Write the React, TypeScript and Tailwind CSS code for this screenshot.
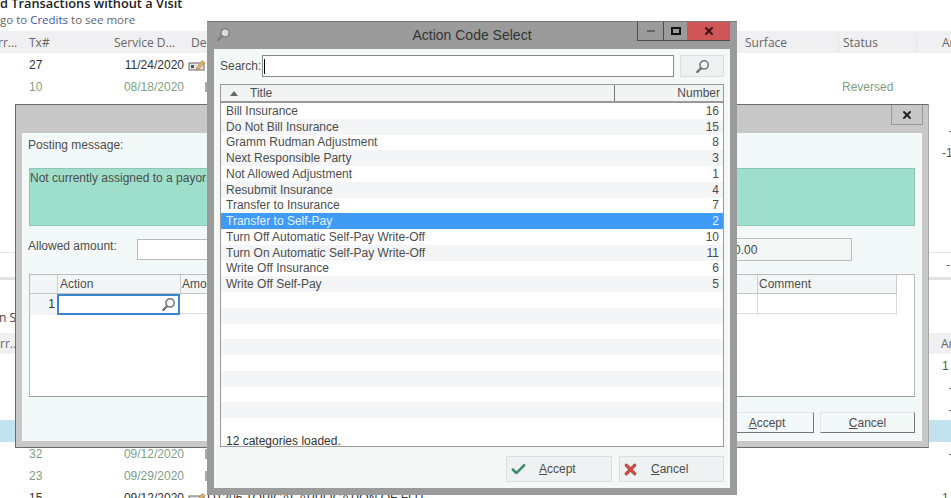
import { Check, X } from 'lucide-react';

const actionCodes = [
  ['Bill Insurance', '16'],
  ['Do Not Bill Insurance', '15'],
  ['Gramm Rudman Adjustment', '8'],
  ['Next Responsible Party', '3'],
  ['Not Allowed Adjustment', '1'],
  ['Resubmit Insurance', '4'],
  ['Transfer to Insurance', '7'],
  ['Transfer to Self-Pay', '2'],
  ['Turn Off Automatic Self-Pay Write-Off', '10'],
  ['Turn On Automatic Self-Pay Write-Off', '11'],
  ['Write Off Insurance', '6'],
  ['Write Off Self-Pay', '5'],
  ['', ''],
  ['', ''],
  ['', ''],
  ['', ''],
  ['', ''],
  ['', ''],
  ['', ''],
  ['', ''],
  ['', ''],
];

type Row = { tx?: string; date?: string; muted?: boolean; status?: string; amount?: string; mark?: boolean; note?: boolean; tint?: boolean };

const upperRows: Row[] = [
  { tx: '27', date: '11/24/2020', note: true },
  { tx: '10', date: '08/18/2020', muted: true, status: 'Reversed', mark: true },
  { note: true },
  { amount: '  -' },
  { amount: '-1' },
  {},
  {},
  {},
];

const lowerRows: Row[] = [
  { amount: '1' },
  { amount: '  -' },
  { amount: '  -' },
  { tint: true },
  { tx: '32', date: '09/12/2020', muted: true, amount: '  -', mark: true },
  { tx: '23', date: '09/29/2020', muted: true, mark: true },
  { tx: '15', date: '09/12/2020', amount: '1', note: true },
];

function SearchGlyph({ className }: { className: string }) {
  return (
    <svg viewBox="0 0 16 16" className={className}>
      <circle cx="9.7" cy="6.3" r="4.4" fill="#f7f7f7" stroke="#777" strokeWidth="1.7" />
      <path d="M6.4 9.8 2.4 13.8" stroke="#6d6d6d" strokeWidth="2.4" strokeLinecap="round" />
    </svg>
  );
}

function NoteIcon() {
  return (
    <svg viewBox="0 0 18 12" className="w-[18px] h-[12px] shrink-0">
      <rect x="1" y="4" width="15" height="7" fill="#e6e6e6" stroke="#666" />
      <rect x="3" y="6" width="3" height="3" fill="#555" />
      <path d="M8 10 14 1.5l3 2L11 10Z" fill="#e3b26d" stroke="#a87a3c" strokeWidth="0.6" />
    </svg>
  );
}

function BackRow({ row }: { row: Row }) {
  return (
    <div className={`grid grid-cols-[29px_81px_74px_4px_553px_97px_78px_35px] h-[22px] pt-[2px] items-center text-[12px] font-['Liberation_Sans',sans-serif] whitespace-pre ${row.tint ? 'bg-[#c3e2ef]' : ''} ${row.muted ? 'text-[#7f9f85]' : 'text-[#333]'}`}>
      <span />
      <span>{row.tx}</span>
      <span className="text-right">{row.date}</span>
      <span />
      <span className="flex items-center gap-[1px]">
        {row.note && <NoteIcon />}
        {row.mark && <span className="ml-[17px] w-[2px] h-[10px] bg-[#aaa]" />}
        {row.tx === '15' && <span className="text-[#333]">D1206 TOPICAL APPLICATION OF FLU</span>}
      </span>
      <span />
      <span className="pl-[4px]">{row.status}</span>
      <span className="pl-[26px] text-[#555]">{row.amount}</span>
    </div>
  );
}

function Underlined({ first, rest }: { first: string; rest: string }) {
  return (
    <span>
      <span className="underline">{first}</span>
      {rest}
    </span>
  );
}

export default function App() {
  return (
    <div className="relative w-[951px] h-[498px] overflow-hidden bg-white font-['Liberation_Sans',sans-serif] text-[#4d4d4d] text-[12px]">
      {/* page behind the dialogs */}
      <div className="flex flex-col font-['Open_Sans',sans-serif]">
        <div className="h-[10px] -mt-[2px] font-semibold text-[12.8px] text-[#222] leading-[10px] whitespace-nowrap">d Transactions without a Visit</div>
        <div className="h-[23px] flex items-center text-[11.5px] text-[#666]">
          <span>go to <span className="text-[#3f5a9a]">Credits</span> to see more</span>
        </div>
        <div className="grid grid-cols-[29px_81px_78px_553px_97px_78px_35px] h-[22px] pt-[2px] items-center bg-[#f0f0f2] text-[#666] text-[12px] whitespace-nowrap">
          <span className="-ml-[2px]">rr...</span>
          <span>Tx#</span>
          <span className="pl-[4px]">Service D...</span>
          <span className="pl-[3px]">De</span>
          <span className="pl-[4px]">Surface</span>
          <span className="pl-[4px] border-l border-[#e4e4e6]">Status</span>
          <span className="pl-[25px] border-l border-[#e4e4e6]">Ar</span>
        </div>
        {upperRows.map((row, i) => (
          <BackRow key={i} row={row} />
        ))}
        <div className="h-[24px] border-b border-[#e4e4e4]" />
        <div className="h-[24px] flex items-center justify-end pr-[1px] text-[#555]">-</div>
        <div className="h-[3px] bg-[#e2e2e2]" />
        <div className="h-[53px] flex items-end pb-[6px] text-[#444]">
          <span className="-ml-[1px]">n S</span>
        </div>
        <div className="grid grid-cols-[916px_35px] h-[21px] items-center bg-[#f0f0f2] text-[#666] whitespace-nowrap">
          <span>rr...</span>
          <span className="pl-[25px]">Ar</span>
        </div>
        {lowerRows.map((row, i) => (
          <BackRow key={i} row={row} />
        ))}
      </div>

      {/* Posting dialog */}
      <div className="absolute left-[15px] top-[104px] w-[914px] h-[344px] flex flex-col border border-[#6b6b6b] border-r-[#a5a5a5] bg-[#c9c8c9]">
        <div className="h-[28px] shrink-0 flex justify-end pr-[5px]">
          <button className="w-[32px] h-[20px] flex items-center justify-center border-l border-b border-r border-[#999]">
            <X size={12} strokeWidth={4} className="text-[#222]" />
          </button>
        </div>
        <div className="flex-1 mx-[6px] mb-[6px] px-[7px] bg-[#f3f9f8] flex flex-col">
          <div className="h-[35px] -ml-[1px] pt-[3px]">Posting message:</div>
          <div className="h-[58px] shrink-0 bg-[#9edfcb] border border-[#8fc5b4]">Not currently assigned to a payor</div>
          <div className="mt-[12px] h-[23px] flex items-center">
            <span className="w-[108px] -ml-[1px] mr-[1px] mb-[7px]">Allowed amount:</span>
            <div className="w-[260px] h-[21px] bg-white border border-[#bbb]" />
            <div className="ml-[223px] w-[232px] h-[23px] flex items-center bg-[#f3f8f7] border border-[#bdbdbd] pl-[113px] text-[#444]">0.00</div>
          </div>
          <div className="mt-[13px] h-[123px] shrink-0 bg-white border border-[#bdbdbd] border-b-[#999]">
            <div className="grid grid-cols-[27px_123px_577px_140px] h-[19px] w-[867px] border-b border-[#c4c4c4] bg-[#f3f6f6]">
              <span />
              <span className="pl-[2px] border-l border-[#ccc] leading-[19px]">Action</span>
              <span className="pl-[1px] border-l border-[#ccc] leading-[19px]">Amount</span>
              <span className="pl-[1px] border-l border-r border-[#ccc] leading-[19px]">Comment</span>
            </div>
            <div className="grid grid-cols-[27px_123px_577px_140px] h-[20px] w-[867px] border-b border-[#ddd]">
              <span className="bg-[#f3f6f6] text-right pr-[2px] leading-[20px] text-[#333]">1</span>
              <div className="flex items-center justify-end pr-[2px] border-2 border-[#3a86cf] h-[21px]">
                <SearchGlyph className="w-[15px] h-[15px]" />
              </div>
              <span />
              <span className="border-l border-r border-[#ddd]" />
            </div>
          </div>
          <div className="mt-[15px] flex justify-end gap-[6px]">
            <button className="w-[94px] h-[21px] bg-[#f3f8f8] border-r border-b border-[#777] border-t border-l border-t-[#e6e6e6] border-l-[#e6e6e6]">
              <Underlined first="A" rest="ccept" />
            </button>
            <button className="w-[95px] h-[21px] bg-[#f3f8f8] border-r border-b border-[#777] border-t border-l border-t-[#e6e6e6] border-l-[#e6e6e6]">
              <Underlined first="C" rest="ancel" />
            </button>
          </div>
        </div>
      </div>

      {/* Action Code Select dialog */}
      <div className="absolute left-[207px] top-[21px] w-[530px] h-[474px] flex flex-col bg-[#9b9b9b] border-t border-[#777]">
        <div className="h-[27px] shrink-0 relative flex items-center justify-center text-[14px] text-[#333]">
          <SearchGlyph className="absolute left-[9px] top-[5px] w-[15px] h-[15px] opacity-70" />
          <span>Action Code Select</span>
          <div className="absolute right-[7px] top-0 flex h-[19px]">
            <div className="w-[26px] flex items-center justify-center border-l border-b border-[#4e4e4e]">
              <span className="w-[8px] h-[2px] bg-[#666]" />
            </div>
            <div className="w-[24px] flex items-center justify-center border-l border-b border-[#4e4e4e]">
              <span className="w-[10px] h-[8px] border-2 border-[#111]" />
            </div>
            <div className="w-[43px] flex items-center justify-center bg-[#cf5557] border-b border-[#4e4e4e]">
              <X size={12} strokeWidth={4} className="text-[#3a1414]" />
            </div>
          </div>
        </div>
        <div className="flex-1 mx-[7px] mb-[7px] px-[6px] pt-[6px] bg-[#f4f9f8] flex flex-col">
          <div className="flex items-center h-[22px] shrink-0">
            <span className="w-[42px]">Search:</span>
            <div className="flex-1 h-[22px] bg-white border border-[#8a8a8a] flex items-center pl-[1px]">
              <span className="w-[1px] h-[15px] bg-black" />
            </div>
            <div className="ml-[6px] w-[44px] h-[22px] flex items-center justify-center bg-[#eef1f1] border border-[#dcdfdf]">
              <SearchGlyph className="w-[15px] h-[15px]" />
            </div>
          </div>
          <div className="mt-[7px] h-[363px] shrink-0 flex flex-col bg-white border border-[#9a9a9a]">
            <div className="h-[18px] shrink-0 flex bg-[#f2f4f4] border-b-2 border-[#999]">
              <div className="w-[394px] flex items-center border-r border-[#777]">
                <span className="ml-[9px] w-0 h-0 border-l-[4px] border-r-[4px] border-b-[5px] border-l-transparent border-r-transparent border-b-[#666]" />
                <span className="ml-[12px]">Title</span>
              </div>
              <div className="flex-1 flex items-center justify-end pr-[3px]">Number</div>
            </div>
            <div className="flex-1 flex flex-col">
              {actionCodes.map(([title, number], i) => (
                <div
                  key={i}
                  className={`h-[15.75px] shrink-0 flex justify-between items-center pl-[5px] pr-[4px] ${i === 7 ? 'bg-[#3f9bf5] text-[#e6f2ff]' : i % 2 === 1 ? 'bg-[#f3f5f7]' : ''}`}
                >
                  <span>{title}</span>
                  <span>{number}</span>
                </div>
              ))}
              <div className="mt-auto h-[14px] pl-[5px] flex items-center text-[#333]">12 categories loaded.</div>
            </div>
          </div>
          <div className="mt-[9px] flex justify-end gap-[7px]">
            <button className="w-[106px] h-[26px] flex items-center bg-[#eef2f2] border border-[#dcdfdf]">
              <Check size={17} strokeWidth={3.5} className="ml-[3px] text-[#3f8b6f]" />
              <span className="ml-[12px]">
                <Underlined first="A" rest="ccept" />
              </span>
            </button>
            <button className="w-[105px] h-[26px] flex items-center bg-[#eef2f2] border border-[#dcdfdf]">
              <X size={17} strokeWidth={4.5} className="ml-[2px] text-[#cc4a44]" />
              <span className="ml-[12px]">
                <Underlined first="C" rest="ancel" />
              </span>
            </button>
          </div>
        </div>
      </div>
    </div>
  );
}
